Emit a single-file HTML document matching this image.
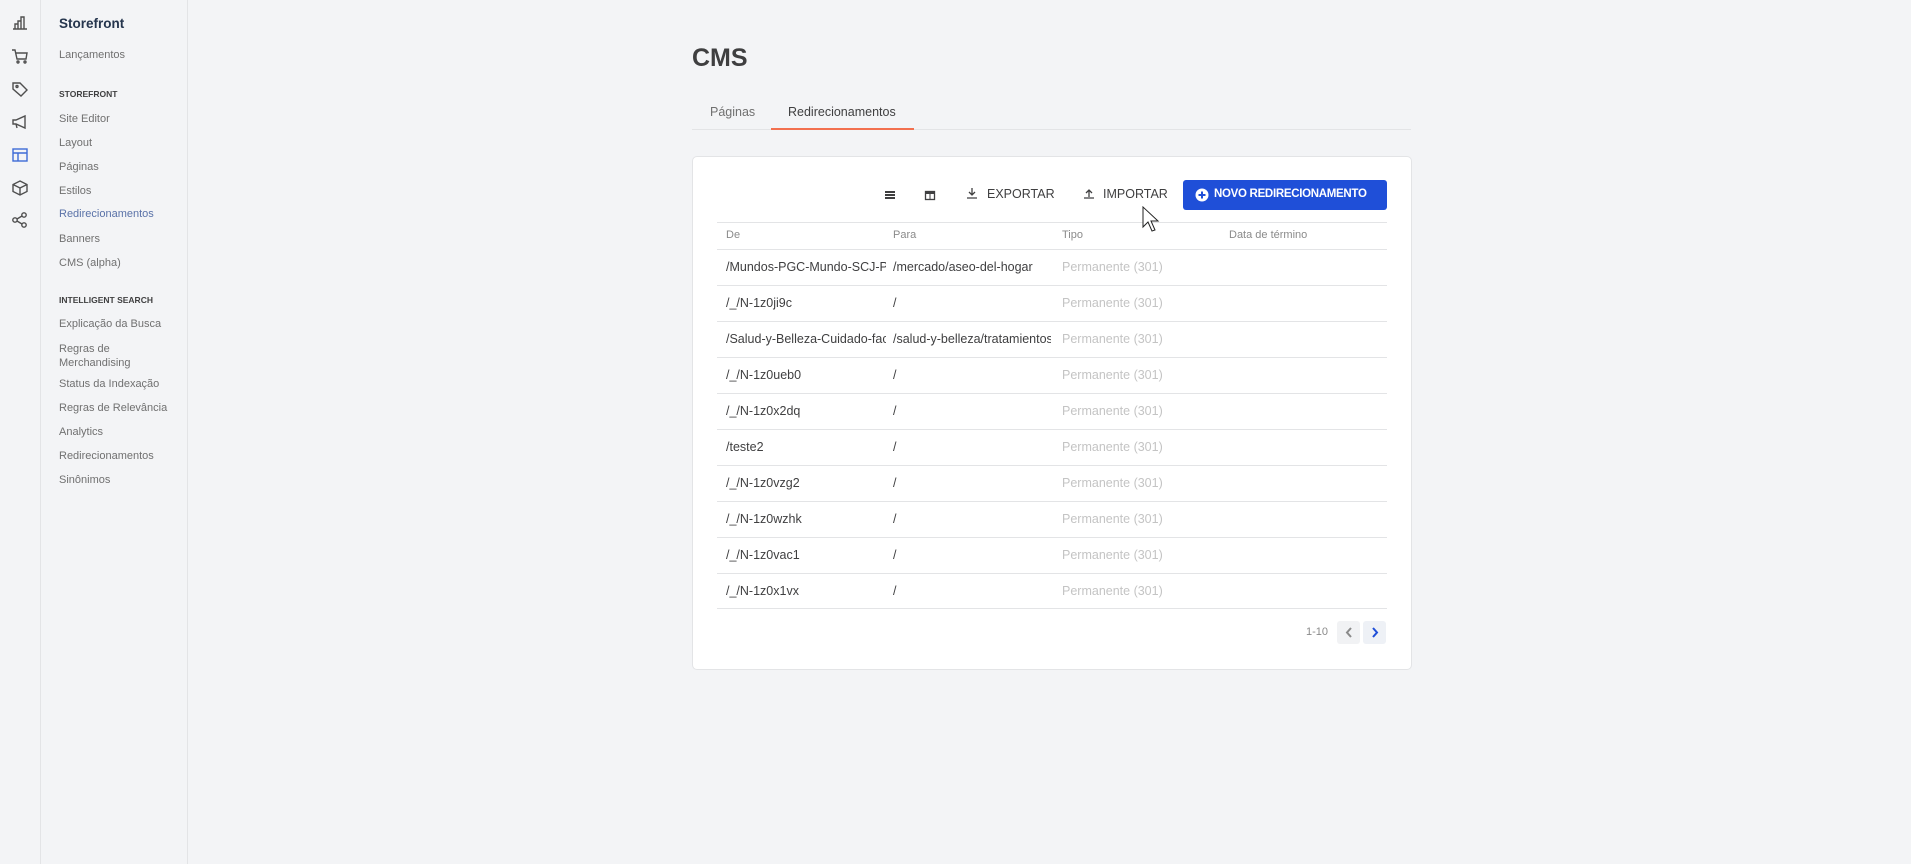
<!DOCTYPE html>
<html><head><meta charset="utf-8"><style>
*{box-sizing:border-box;margin:0;padding:0}
body{width:1911px;height:864px;background:#f3f4f6;font-family:"Liberation Sans",sans-serif;color:#3f3f40;position:relative;overflow:hidden}
.rail{position:absolute;left:0;top:0;width:41px;height:864px;background:#f3f4f6;border-right:1px solid #e3e4e6}
.rail svg{position:absolute;left:11px;width:18px;height:18px;fill:none;stroke:#4f4f4f;stroke-width:1.4}
.side{position:absolute;left:41px;top:0;width:147px;height:864px;border-right:1px solid #e3e4e6}
.side div{position:absolute;left:18px;font-size:11px;color:#707070;white-space:nowrap}
.side .h{font-size:8.5px;color:#3f3f40;font-weight:bold}
.t{position:absolute;white-space:nowrap}
.card{position:absolute;left:692px;top:156px;width:720px;height:514px;background:#fff;border:1px solid #e3e4e6;border-radius:5px}
.row{position:absolute;left:717px;width:670px;border-top:1px solid #e3e4e6;height:36px}
.row span{position:absolute;top:10px;font-size:12.5px;color:#3f3f40;white-space:nowrap;overflow:hidden}
.row .a{left:9px;width:160px}.row .b{left:176px;width:158px}.row .c{left:345px;color:#c4c4c4}
</style></head><body>
<div class="rail">
<svg style="top:14px" viewBox="0 0 18 18"><path d="M2 15h14M4 15v-5h3v5M7 15V7h3v8M10 15V3h3v12"/></svg>
<svg style="top:47px" viewBox="0 0 18 18"><path d="M1 3h3l2 9h9l1-6H5"/><circle cx="7" cy="15" r="1"/><circle cx="14" cy="15" r="1"/></svg>
<svg style="top:80px" viewBox="0 0 18 18"><path d="M2 3v6l8 7 6-6-7-7z"/><circle cx="6" cy="6.5" r="1"/></svg>
<svg style="top:113px" viewBox="0 0 18 18"><path d="M2 7v4h3l9 4V3L5 7zM5 11l1 4"/></svg>
<svg style="top:146px;stroke:#3e6bd6" viewBox="0 0 18 18"><rect x="2" y="3" width="14" height="12"/><path d="M2 7h14M7 7v8"/></svg>
<svg style="top:179px" viewBox="0 0 18 18"><path d="M9 2l7 3.5v7L9 16l-7-3.5v-7zM2 5.5L9 9l7-3.5M9 9v7"/></svg>
<svg style="top:211px" viewBox="0 0 18 18"><circle cx="4" cy="9" r="2.2"/><circle cx="13" cy="4" r="2.2"/><circle cx="13" cy="14" r="2.2"/><path d="M6 8l5-3M6 10l5 3"/></svg>
</div>
<div class="side">
<div style="top:16px;font-size:13.5px;color:#25354d;font-weight:bold">Storefront</div>
<div style="top:49px">Lançamentos</div>
<div class="h" style="top:89px">STOREFRONT</div>
<div style="top:113px">Site Editor</div>
<div style="top:137px">Layout</div>
<div style="top:161px">Páginas</div>
<div style="top:185px">Estilos</div>
<div style="top:208px;color:#5a72a8">Redirecionamentos</div>
<div style="top:233px">Banners</div>
<div style="top:257px">CMS (alpha)</div>
<div class="h" style="top:295px">INTELLIGENT SEARCH</div>
<div style="top:318px">Explicação da Busca</div>
<div style="top:342px;line-height:14px">Regras de<br>Merchandising</div>
<div style="top:378px">Status da Indexação</div>
<div style="top:402px">Regras de Relevância</div>
<div style="top:426px">Analytics</div>
<div style="top:450px">Redirecionamentos</div>
<div style="top:474px">Sinônimos</div>
</div>
<div class="t" style="left:692px;top:44px;font-size:25px;font-weight:bold;color:#3f3f40">CMS</div>
<div class="t" style="left:710px;top:105px;font-size:12.5px;color:#707070">Páginas</div>
<div class="t" style="left:788px;top:105px;font-size:12.5px;color:#3f3f40">Redirecionamentos</div>
<div style="position:absolute;left:692px;top:129px;width:719px;height:1px;background:#e3e4e6"></div>
<div style="position:absolute;left:771px;top:128px;width:143px;height:2px;background:#f2704f"></div>
<div class="card"></div>
<svg style="position:absolute;left:884px;top:189px" width="12" height="12" viewBox="0 0 12 12" fill="#3f3f40"><rect x="1" y="2" width="10" height="2"/><rect x="1" y="5" width="10" height="2"/><rect x="1" y="8" width="10" height="2"/></svg>
<svg style="position:absolute;left:924px;top:189px" width="12" height="12" viewBox="0 0 12 12"><rect x="1.5" y="2.5" width="9" height="8" fill="none" stroke="#3f3f40" stroke-width="1.3"/><rect x="1" y="2" width="10" height="3" fill="#3f3f40"/><path d="M6 5v5" stroke="#3f3f40"/></svg>
<svg style="position:absolute;left:966px;top:187px" width="12" height="13" viewBox="0 0 12 13" fill="none" stroke="#3f3f40" stroke-width="1.3"><path d="M6 1v7M3 5l3 3 3-3M1 11h10"/></svg>
<div class="t" style="left:987px;top:187px;font-size:12.5px">EXPORTAR</div>
<svg style="position:absolute;left:1083px;top:187px" width="12" height="13" viewBox="0 0 12 13" fill="none" stroke="#3f3f40" stroke-width="1.3"><path d="M6 10V3M3 6l3-3 3 3M1 11h10"/></svg>
<div class="t" style="left:1103px;top:187px;font-size:12.5px">IMPORTAR</div>
<div style="position:absolute;left:1183px;top:180px;width:204px;height:30px;background:#1f4fd8;border-radius:3px"></div>
<svg style="position:absolute;left:1195px;top:188px" width="14" height="14" viewBox="0 0 14 14"><circle cx="7" cy="7" r="6.5" fill="#fff"/><path d="M7 3.5v7M3.5 7h7" stroke="#1f4fd8" stroke-width="2"/></svg>
<div class="t" style="left:1214px;top:188px;font-size:11.5px;font-weight:bold;color:#fff;letter-spacing:-0.3px">NOVO REDIRECIONAMENTO</div>
<div style="position:absolute;left:717px;top:222px;width:670px;height:1px;background:#e3e4e6"></div>
<div class="t" style="left:726px;top:229px;font-size:11px;color:#8a8a8a">De</div>
<div class="t" style="left:893px;top:229px;font-size:11px;color:#8a8a8a">Para</div>
<div class="t" style="left:1062px;top:229px;font-size:11px;color:#8a8a8a">Tipo</div>
<div class="t" style="left:1229px;top:229px;font-size:11px;color:#8a8a8a">Data de término</div>
<div class="row" style="top:249px"><span class="a">/Mundos-PGC-Mundo-SCJ-Papel</span><span class="b">/mercado/aseo-del-hogar</span><span class="c">Permanente (301)</span></div>
<div class="row" style="top:285px"><span class="a">/_/N-1z0ji9c</span><span class="b">/</span><span class="c">Permanente (301)</span></div>
<div class="row" style="top:321px"><span class="a">/Salud-y-Belleza-Cuidado-facial</span><span class="b">/salud-y-belleza/tratamientos</span><span class="c">Permanente (301)</span></div>
<div class="row" style="top:357px"><span class="a">/_/N-1z0ueb0</span><span class="b">/</span><span class="c">Permanente (301)</span></div>
<div class="row" style="top:393px"><span class="a">/_/N-1z0x2dq</span><span class="b">/</span><span class="c">Permanente (301)</span></div>
<div class="row" style="top:429px"><span class="a">/teste2</span><span class="b">/</span><span class="c">Permanente (301)</span></div>
<div class="row" style="top:465px"><span class="a">/_/N-1z0vzg2</span><span class="b">/</span><span class="c">Permanente (301)</span></div>
<div class="row" style="top:501px"><span class="a">/_/N-1z0wzhk</span><span class="b">/</span><span class="c">Permanente (301)</span></div>
<div class="row" style="top:537px"><span class="a">/_/N-1z0vac1</span><span class="b">/</span><span class="c">Permanente (301)</span></div>
<div class="row" style="top:573px"><span class="a">/_/N-1z0x1vx</span><span class="b">/</span><span class="c">Permanente (301)</span></div>
<div style="position:absolute;left:717px;top:608px;width:670px;height:1px;background:#e3e4e6"></div>
<div class="t" style="left:1306px;top:626px;font-size:11px;color:#8a8a8a">1-10</div>
<div style="position:absolute;left:1337px;top:621px;width:23px;height:23px;background:#f1f2f4;border-radius:3px"></div>
<svg style="position:absolute;left:1343px;top:626px" width="12" height="13" viewBox="0 0 12 13" fill="none" stroke="#8a8a8a" stroke-width="2"><path d="M8 2L4 6.5 8 11"/></svg>
<div style="position:absolute;left:1363px;top:621px;width:23px;height:23px;background:#eef1f6;border-radius:3px"></div>
<svg style="position:absolute;left:1369px;top:626px" width="12" height="13" viewBox="0 0 12 13" fill="none" stroke="#1f4fd8" stroke-width="2"><path d="M4 2l4 4.5L4 11"/></svg>
<svg style="position:absolute;left:1142px;top:206px" width="20" height="30" viewBox="0 0 20 30"><path d="M1 1v20l5-5 4 9 3-1-4-9h7z" fill="#fff" stroke="#222" stroke-width="1"/></svg>
</body></html>
